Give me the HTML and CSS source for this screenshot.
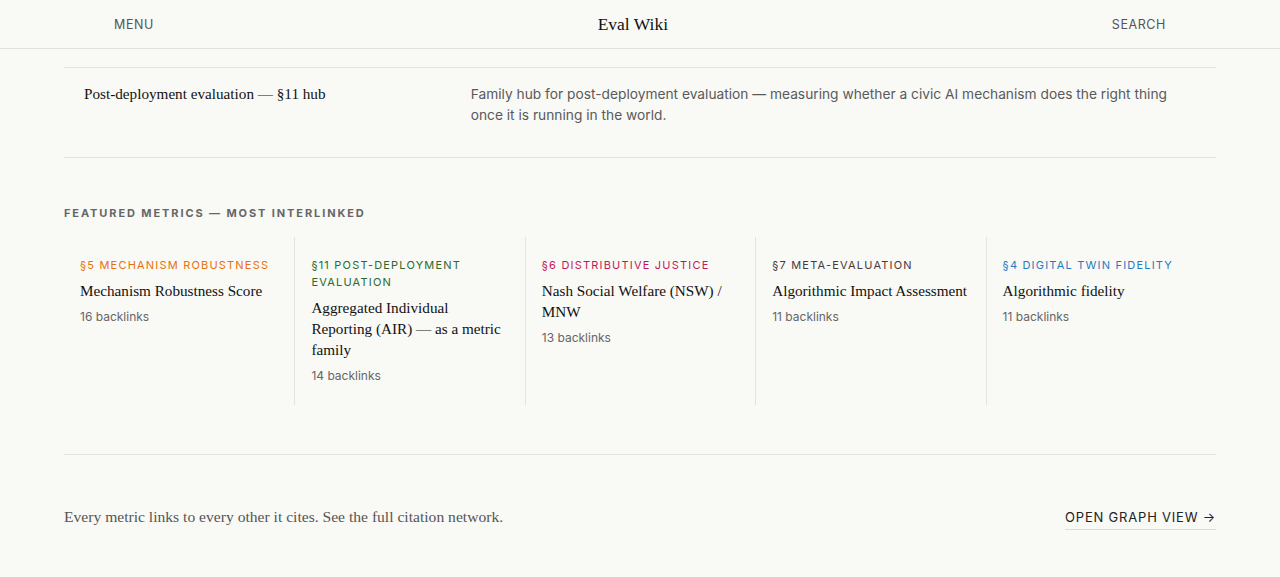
FILE: index.html
```html
<!DOCTYPE html>
<html lang="en">
<head>
    <meta charset="UTF-8">
    <meta name="viewport" content="width=device-width, initial-scale=1.0">
    <title>Eval Wiki</title>
    <link rel="stylesheet" href="styles.css">
</head>
<body>

<header class="topbar">
    <a class="topbar-link" href="#">Menu</a>
    <a class="brand" href="#">Eval Wiki</a>
    <a class="topbar-link" href="#">Search</a>
</header>

<main class="page">
    <div class="hub-row">
        <a class="hub-title" href="#">Post-deployment evaluation — §11 hub</a>
        <p class="hub-desc">Family hub for post-deployment evaluation — measuring whether a civic AI mechanism does the right thing once it is running in the world.</p>
    </div>

    <section class="featured">
        <h3 class="section-label">Featured metrics — most interlinked</h3>
        <div class="metric-grid">
            <a class="metric" href="#">
                <span class="metric-cat cat-orange">§5 Mechanism Robustness</span>
                <span class="metric-title">Mechanism Robustness Score</span>
                <span class="metric-links">16 backlinks</span>
            </a>
            <a class="metric" href="#">
                <span class="metric-cat cat-green">§11 Post-Deployment Evaluation</span>
                <span class="metric-title">Aggregated Individual Reporting (AIR) — as a metric family</span>
                <span class="metric-links">14 backlinks</span>
            </a>
            <a class="metric" href="#">
                <span class="metric-cat cat-pink">§6 Distributive Justice</span>
                <span class="metric-title">Nash Social Welfare (NSW) / MNW</span>
                <span class="metric-links">13 backlinks</span>
            </a>
            <a class="metric" href="#">
                <span class="metric-cat cat-brown">§7 Meta-Evaluation</span>
                <span class="metric-title">Algorithmic Impact Assessment</span>
                <span class="metric-links">11 backlinks</span>
            </a>
            <a class="metric" href="#">
                <span class="metric-cat cat-blue">§4 Digital Twin Fidelity</span>
                <span class="metric-title">Algorithmic fidelity</span>
                <span class="metric-links">11 backlinks</span>
            </a>
        </div>
    </section>

    <section class="graph-cta">
        <p class="cta-text">Every metric links to every other it cites. See the full citation network.</p>
        <a class="cta-link" href="#">Open graph view →</a>
    </section>
</main>

</body>
</html>
```

FILE: styles.css
```css
body {
    margin: 0;
    background-color: #f9f9f6;
    color: #1a1a1a;
    font-family: Inter, "Liberation Sans", sans-serif;
}

a {
    color: inherit;
    text-decoration: none;
}

.topbar {
    height: 49px;
    box-sizing: border-box;
    border-bottom: 1px solid #e2e2dd;
    display: flex;
    align-items: center;
    justify-content: space-between;
    padding: 0 114px;
}

.topbar-link {
    font-size: 12.5px;
    letter-spacing: 0.6px;
    text-transform: uppercase;
    color: #555;
}

.brand {
    font-family: "Liberation Serif", serif;
    font-size: 17.5px;
    color: #111;
}

.page {
    max-width: 1152px;
    margin: 0 auto;
    padding-top: 18px;
}

.hub-row {
    display: grid;
    grid-template-columns: 1fr 2fr;
    gap: 24px;
    padding: 15px 20px 31px;
    border-top: 1px solid #e4e4df;
    border-bottom: 1px solid #e4e4df;
}

.hub-title {
    font-family: "Liberation Serif", serif;
    font-size: 15.2px;
    line-height: 21px;
    color: #111;
}

.hub-desc {
    margin: 0;
    padding-top: 1px;
    font-size: 13.75px;
    line-height: 21px;
    color: #5a5a5a;
}

.featured {
    padding-top: 48px;
}

.section-label {
    margin: 0 0 17px;
    font-size: 11px;
    line-height: 14px;
    font-weight: 700;
    letter-spacing: 1.9px;
    text-transform: uppercase;
    color: #666;
}

.metric-grid {
    display: grid;
    grid-template-columns: repeat(5, 1fr);
}

.metric {
    display: flex;
    flex-direction: column;
    padding: 20px 12px 20px 16px;
    border-left: 1px solid #e4e4df;
}

.metric:first-child {
    border-left: none;
}

.metric-cat {
    font-size: 11px;
    line-height: 17px;
    letter-spacing: 1.2px;
    text-transform: uppercase;
}

.cat-orange { color: #e8710a; }
.cat-green { color: #2b6a2b; }
.cat-pink { color: #c2185b; }
.cat-brown { color: #4b3a36; }
.cat-blue { color: #1f7cc4; }

.metric-title {
    margin-top: 6px;
    font-family: "Liberation Serif", serif;
    font-size: 15.2px;
    line-height: 21px;
    color: #111;
}

.metric-links {
    margin-top: 7px;
    font-size: 12px;
    line-height: 18px;
    color: #666;
}

.graph-cta {
    margin-top: 49px;
    border-top: 1px solid #e4e4df;
    padding-top: 49px;
    display: flex;
    justify-content: space-between;
    align-items: center;
}

.cta-text {
    margin: 0;
    font-family: "Liberation Serif", serif;
    font-size: 15.6px;
    line-height: 24px;
    color: #555;
}

.cta-link {
    font-size: 13px;
    letter-spacing: 0.8px;
    text-transform: uppercase;
    color: #222;
    padding: 5px 0 4px;
    border-bottom: 1px solid #dcdcd6;
}
```
